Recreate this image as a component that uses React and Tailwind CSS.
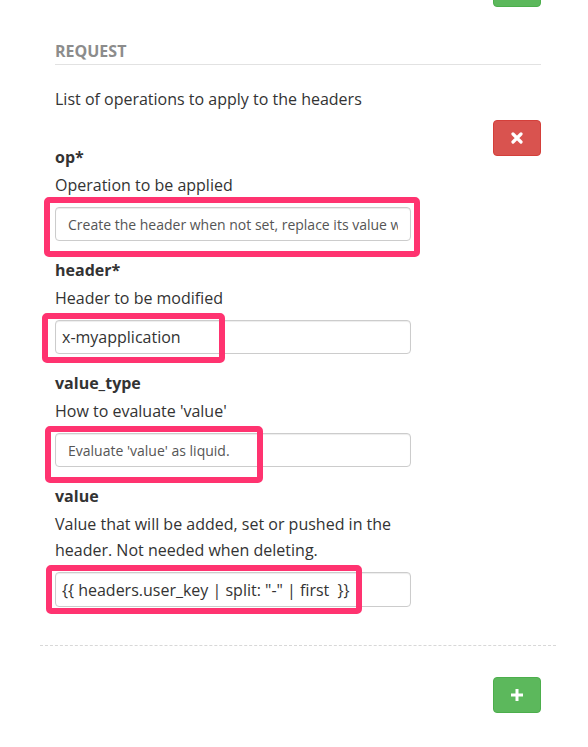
import React from 'react';

const Highlight = ({ className }) => (
    <div className={`absolute pointer-events-none rounded-[5px] border-[6px] border-[#ff3370] ${className}`} />
);

const Field = ({ label, help, children }) => (
    <div className="flex flex-col">
        <label className="font-bold text-[16px] leading-[26px] text-[#333] mb-0.5">{label}</label>
        <p className="text-[16px] leading-[26px] text-[#333] mb-[9px]">{help}</p>
        {children}
    </div>
);

const SelectBox = ({ children }) => (
    <div className="h-[34px] rounded border border-[#ccc] bg-white px-3 flex items-center text-[14px] text-[#555] shadow-[inset_0_1px_1px_rgba(0,0,0,0.075)]">
        <div className="flex-1 overflow-hidden whitespace-nowrap">{children}</div>
    </div>
);

const App = () => {
    return (
        <div className="min-h-[747px] bg-white pl-[40px] pr-[32px] text-[#333]" style={{ fontFamily: '"Open Sans", "Liberation Sans", sans-serif' }}>
            <div className="px-[15px]">
                <div className="flex justify-end">
                    <button className="-mt-[29px] h-9 w-12 rounded bg-[#5cb85c] border border-[#4cae4c]" />
                </div>

                <h4 className="mt-[34px] pb-[2px] border-b border-[#e2e2e2] text-[16px] leading-[21px] font-bold uppercase text-[#8c8c8c]">
                    Request
                </h4>

                <p className="mt-[21px] text-[16px] leading-[26px]">List of operations to apply to the headers</p>

                <div className="mt-[8px] flex justify-between items-start">
                    <div className="w-[356px] pt-6 flex flex-col gap-[16px]">
                        <Field label="op*" help="Operation to be applied">
                            <div className="relative">
                                <SelectBox>Create the header when not set, replace its value when set</SelectBox>
                                <Highlight className="-left-[11px] -top-[10px] w-[376px] h-[60px]" />
                            </div>
                        </Field>

                        <Field label="header*" help="Header to be modified">
                            <div className="relative">
                                <input
                                    readOnly
                                    value="x-myapplication"
                                    className="w-full h-[34px] rounded border border-[#ccc] bg-white px-1.5 text-[16px] text-[#333] outline-none shadow-[inset_0_1px_1px_rgba(0,0,0,0.075)]"
                                />
                                <Highlight className="-left-[13px] -top-[7px] w-[183px] h-[50px]" />
                            </div>
                        </Field>

                        <Field label="value_type" help="How to evaluate 'value'">
                            <div className="relative">
                                <SelectBox>Evaluate 'value' as liquid.</SelectBox>
                                <Highlight className="-left-[10px] -top-[7px] w-[218px] h-[57px]" />
                            </div>
                        </Field>

                        <Field label="value" help="Value that will be added, set or pushed in the header. Not needed when deleting.">
                            <div className="relative">
                                <input
                                    readOnly
                                    value={'{{ headers.user_key | split: "-" | first  }}'}
                                    className="w-full h-[35px] rounded border border-[#ccc] bg-white px-1.5 text-[16px] text-[#333] outline-none shadow-[inset_0_1px_1px_rgba(0,0,0,0.075)]"
                                />
                                <Highlight className="-left-[9px] -top-[7px] w-[316px] h-[49px]" />
                            </div>
                        </Field>
                    </div>

                    <button className="h-9 w-12 rounded bg-[#d9534f] border border-[#d43f3a] flex items-center justify-center">
                        <svg width="12" height="12" viewBox="0 0 12 12">
                            <path d="M2 2 L10 10 M10 2 L2 10" stroke="#fff" strokeWidth="3.2" strokeLinecap="round" />
                        </svg>
                    </button>
                </div>
            </div>

            <div className="mt-[38px] border-t border-dashed border-[#d8d8d8]" />

            <div className="px-[15px] mt-[31px] flex justify-end">
                <button className="h-9 w-12 rounded bg-[#5cb85c] border border-[#4cae4c] flex items-center justify-center">
                    <svg width="14" height="14" viewBox="0 0 14 14">
                        <path d="M7 1 V13 M1 7 H13" stroke="#fff" strokeWidth="3" />
                    </svg>
                </button>
            </div>
        </div>
    );
};

export default App;
